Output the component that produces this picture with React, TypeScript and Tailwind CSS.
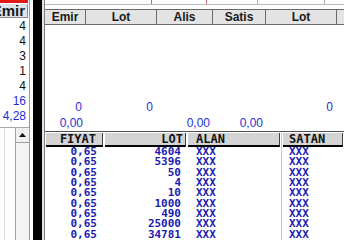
const leftRows = [
  { v: '4', blue: false },
  { v: '4', blue: false },
  { v: '3', blue: false },
  { v: '1', blue: false },
  { v: '4', blue: false },
  { v: '16', blue: true },
  { v: '4,28', blue: true },
];

const lots = ['4604', '5396', '50', '4', '10', '1000', '490', '25000', '34781'];

// bottom depth table columns
const depthCols = [
  { title: 'FIYAT', w: 'w-[59px]', align: 'justify-end pr-[6px]', cell: (i: number) => '0,65', pad: 'justify-end pr-[7px]', sep: '' },
  { title: 'LOT', w: 'w-[83px]', align: 'justify-end pr-[2px]', cell: (i: number) => lots[i], pad: 'justify-end pr-[6px]', sep: '' },
  { title: 'ALAN', w: 'w-[94px]', align: 'justify-start pl-[8px]', cell: (i: number) => 'XXX', pad: 'justify-start pl-[9px]', sep: '' },
  { title: 'SATAN', w: 'w-[63px]', align: 'justify-start pl-[6px]', cell: (i: number) => 'XXX', pad: 'justify-start pl-[7px]', sep: 'border-l border-[#c8c8c8]' },
];

export default function App() {
  return (
    <div className="w-[344px] h-[240px] overflow-hidden flex bg-white font-['Liberation_Sans',Arial,sans-serif]">
      {/* sol panel */}
      <div className="w-[30px] shrink-0 flex flex-col border-r border-[#9a9a9a]">
        <div className="h-[3px] w-[28px] bg-[#e01818]" />
        <div className="h-[1px]" />
        <div className="h-[14px] w-[28px] bg-[#dde3ea] border-b border-r border-[#8a8a8a] flex items-center justify-end overflow-hidden pr-[2px]">
          <span className="text-[15px] font-bold text-[#1a1a1a] leading-none whitespace-nowrap shrink-0">Emir</span>
        </div>
        {leftRows.map((r, i) => (
          <div key={i} className={`h-[15px] flex items-center justify-end pr-[3px] text-[12px] leading-none ${r.blue ? 'text-[#1f2fd6]' : 'text-[#111]'}`}>
            {r.v}
          </div>
        ))}
        <div className="h-[4px]" />
        <div className="flex-1 flex border-t border-[#a8a8a8]">
          <div className="w-[5px] border-r border-[#dcdcdc]" />
          <div className="w-[11px] border-r border-[#a0a0a0]" />
          <div className="flex-1 flex flex-col bg-[#f4f4f4]">
            <div className="h-[15px] bg-[#f0f0f0] border-b border-[#a0a0a0] flex items-center justify-center">
              <svg width="7" height="4" viewBox="0 0 7 4"><path d="M3.5 0 L7 4 L0 4 Z" fill="#111" /></svg>
            </div>
          </div>
        </div>
      </div>

      <div className="w-[3px] shrink-0" />
      <div className="w-[9px] shrink-0 bg-black" />
      <div className="w-[2px] shrink-0 bg-[#e4e4e4]" />

      {/* sag panel */}
      <div className="flex-1 flex flex-col border-l border-[#808080] min-w-0">
        <div className="h-[9px] flex flex-col">
          <div className="h-[4px] flex">
            <div className="w-[106px]" />
            <div className="w-[1px] bg-[#c87070]" />
            <div className="w-[54px]" />
            <div className="w-[1px] bg-[#c87070]" />
            <div className="w-[50px]" />
            <div className="w-[1px] bg-[#b0b0b0]" />
            <div className="w-[66px]" />
            <div className="w-[1px] bg-[#b0b0b0]" />
          </div>
          <div className="h-[1px] bg-[#b8b8b8]" />
        </div>

        <div className="h-[16px] flex border-y border-[#6a6a6a] bg-[#e3e3e3] text-[12px] font-bold text-[#1a1a1a]">
          <div className="w-[41px] shrink-0 flex items-center justify-center border-r border-[#6a6a6a]">Emir</div>
          <div className="w-[71px] shrink-0 flex items-center justify-center border-r border-[#6a6a6a]">Lot</div>
          <div className="w-[56px] shrink-0 flex items-center justify-center border-r border-[#6a6a6a]">Alis</div>
          <div className="w-[53px] shrink-0 flex items-center justify-center border-r border-[#6a6a6a]">Satis</div>
          <div className="w-[71px] shrink-0 flex items-center justify-center border-r border-[#6a6a6a]">Lot</div>
          <div className="flex-1" />
        </div>

        <div className="flex-1" />

        <div className="h-[16px] flex text-[12px] text-[#1f2fd6] leading-none">
          <div className="w-[41px] shrink-0 flex items-center justify-end pr-[4px]">0</div>
          <div className="w-[71px] shrink-0 flex items-center justify-end pr-[4px]">0</div>
          <div className="w-[56px] shrink-0" />
          <div className="w-[53px] shrink-0" />
          <div className="w-[71px] shrink-0 flex items-center justify-end pr-[4px]">0</div>
        </div>
        <div className="h-[16px] flex text-[12px] text-[#1f2fd6] leading-none">
          <div className="w-[41px] shrink-0 flex items-center justify-end pr-[3px]">0,00</div>
          <div className="w-[71px] shrink-0" />
          <div className="w-[56px] shrink-0 flex items-center justify-end pr-[3px]">0,00</div>
          <div className="w-[53px] shrink-0 flex items-center justify-end pr-[3px]">0,00</div>
        </div>

        {/* derinlik tablosu */}
        <div className="h-[109px] shrink-0 flex border-t border-[#505050] pt-[1px] font-['DejaVu_Sans_Mono',monospace] font-bold">
          {depthCols.map((c) => (
            <div key={c.title} className={`${c.w} shrink-0 flex flex-col ${c.sep}`}>
              <div className={`h-[14px] mx-[1px] flex items-center ${c.align} bg-[#d4d4d4] border-r border-[#404040] border-b-2 border-b-black text-[12px] leading-none text-[#111]`}>
                {c.title}
              </div>
              {lots.map((_, i) => (
                <div key={i} className={`h-[10.8px] flex items-center ${c.pad} text-[11px] leading-[10px] text-[#1c1cb0]`}>
                  {c.cell(i)}
                </div>
              ))}
            </div>
          ))}
        </div>
      </div>
    </div>
  );
}
